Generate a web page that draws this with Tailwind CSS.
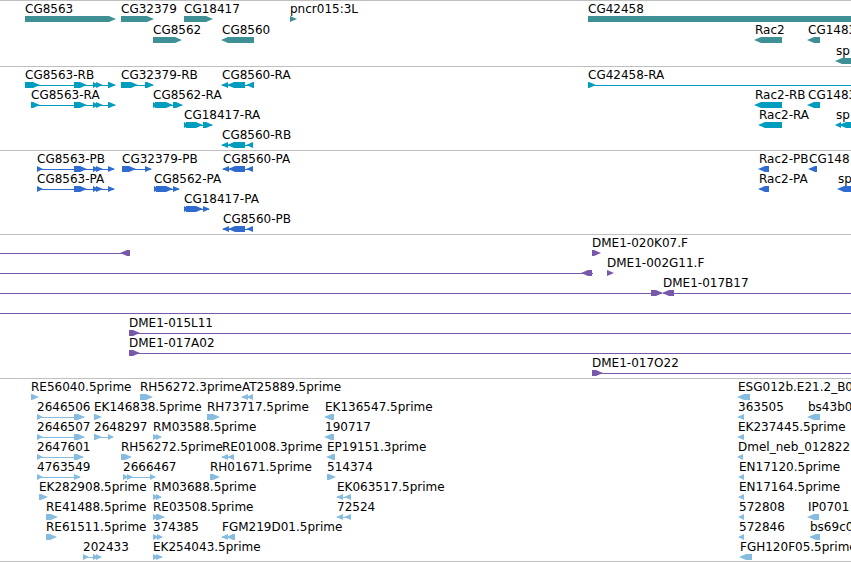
<!DOCTYPE html>
<html lang="en">
<head>
  <meta charset="UTF-8">
  <meta name="viewport" content="width=device-width, initial-scale=1">
  <title>Genome Browser</title>
  <script src="https://cdn.jsdelivr.net/npm/@tailwindcss/browser@4"></script>
</head>
<body class="bg-white text-black font-['DejaVu_Sans',sans-serif] text-[12px] leading-4 overflow-x-hidden">

  <main id="tracks" class="w-full border-b border-[#bfbfbf]"></main>

  <script>
    // feature: [label, x, strand, [[start, end], ...], line start, line end]
    const END = 4000;
    const cg8563 = [[74, 86], [93, 98], [96, 102]];
    const tracks = [
      {
        name: 'Genes', color: 'text-[#3f9094]', row: 'h-[21px]', pad: 'pb-[2px]',
        rows: [
          [
            ['CG8563', 25, 1, [[25, 115]]],
            ['CG32379', 121, 1, [[121, 153]]],
            ['CG18417', 184, 1, [[184, 212]]],
            ['pncr015:3L', 290, 1, [[290, 296]]],
            ['CG42458', 588, 1, [[588, END]]],
          ],
          [
            ['CG8562', 153, 1, [[153, 181]]],
            ['CG8560', 222, -1, [[222, 254]]],
            ['Rac2', 755, -1, [[755, 782]]],
            ['CG1483', 808, -1, [[808, 820]]],
          ],
          [
            ['sp', 836, -1, [[836, 880]]],
          ],
        ],
      },
      {
        name: 'Transcripts', color: 'text-[#009dbf]', row: 'h-[20px]', pad: 'pb-[3px]',
        rows: [
          [
            ['CG8563-RB', 25, 1, [[25, 39], ...cg8563, [108, 115]]],
            ['CG32379-RB', 121, 1, [[121, 137], [145, 153]]],
            ['CG8560-RA', 222, -1, [[222, 228], [228, 245], [247, 254]]],
            ['CG42458-RA', 588, 1, [[588, 595]], 588, END],
          ],
          [
            ['CG8563-RA', 31, 1, [[31, 39], ...cg8563, [108, 115]]],
            ['CG8562-RA', 153, 1, [[153, 157], [155, 172], [173, 182]]],
            ['Rac2-RB', 755, -1, [[755, 782]]],
            ['CG1483', 808, -1, [[808, 820]]],
          ],
          [
            ['CG18417-RA', 184, 1, [[184, 188], [186, 202], [203, 212]]],
            ['Rac2-RA', 759, -1, [[759, 782]]],
            ['sp', 836, -1, [[836, 841], [840, 880]]],
          ],
          [
            ['CG8560-RB', 222, -1, [[222, 228], [228, 245], [247, 253]]],
          ],
        ],
      },
      {
        name: 'Proteins', color: 'text-[#306ccf]', row: 'h-[20px]', pad: 'pb-[3px]',
        rows: [
          [
            ['CG8563-PB', 37, 1, [[37, 42], ...cg8563, [108, 114]]],
            ['CG32379-PB', 122, 1, [[122, 135], [145, 151]]],
            ['CG8560-PA', 223, -1, [[223, 229], [229, 245], [247, 253]]],
            ['Rac2-PB', 759, -1, [[759, 769]]],
            ['CG148', 809, -1, [[809, 817]]],
          ],
          [
            ['CG8563-PA', 37, 1, [[37, 42], ...cg8563, [108, 114]]],
            ['CG8562-PA', 154, 1, [[154, 158], [156, 172], [173, 179]]],
            ['Rac2-PA', 759, -1, [[759, 769]]],
            ['sp', 838, -1, [[838, 880]]],
          ],
          [
            ['CG18417-PA', 184, 1, [[184, 188], [186, 202], [203, 209]]],
          ],
          [
            ['CG8560-PB', 223, -1, [[223, 229], [229, 245], [247, 253]]],
          ],
        ],
      },
      {
        name: 'BACs', color: 'text-[#7858a8]', row: 'h-[20px]', pad: 'pb-[3px]',
        rows: [
          [
            ['', 0, -1, [[121, 130]], 0, 130],
            ['DME1-020K07.F', 592, 1, [[592, 600]]],
          ],
          [
            ['', 0, -1, [[582, 592]], 0, 593],
            ['DME1-002G11.F', 607, 1, [[607, 613]]],
          ],
          [
            ['', 0, 1, [[651, 662]], 0, 662],
            ['DME1-017B17', 663, -1, [[663, 674]], 663, END],
          ],
          [
            ['', 0, 1, [], 0, END],
          ],
          [
            ['DME1-015L11', 129, 1, [[129, 139]], 129, END],
          ],
          [
            ['DME1-017A02', 129, 1, [[129, 139]], 129, END],
          ],
          [
            ['DME1-017O22', 592, 1, [[592, 602]], 592, END],
          ],
        ],
      },
      {
        name: 'ESTs', color: 'text-[#86bcdf]', row: 'h-[20px]', pad: 'pb-[2px]',
        rows: [
          [
            ['RE56040.5prime', 31, 1, [[31, 38]]],
            ['RH56272.3prime', 140, 1, [[140, 152]]],
            ['AT25889.5prime', 242, -1, [[242, 248], [247, 253]]],
            ['ESG012b.E21.2_B0', 738, -1, [[738, 750]]],
          ],
          [
            ['2646506', 37, 1, [[37, 42], [74, 84]]],
            ['EK146838.5prime', 94, 1, [[94, 101]]],
            ['RH73717.5prime', 207, 1, [[207, 219]]],
            ['EK136547.5prime', 325, -1, [[325, 334]]],
            ['363505', 738, -1, [[738, 744]]],
            ['bs43b0', 808, -1, [[808, 820]]],
          ],
          [
            ['2646507', 37, 1, [[37, 42], [74, 84]]],
            ['2648297', 94, 1, [[94, 101], [108, 113]]],
            ['RM03588.5prime', 153, 1, [[153, 158], [156, 161]]],
            ['190717', 325, -1, [[325, 334]]],
            ['EK237445.5prime', 738, -1, [[738, 744]]],
          ],
          [
            ['2647601', 37, 1, [[37, 42], [74, 83]]],
            ['RH56272.5prime', 121, 1, [[121, 131]]],
            ['RE01008.3prime', 222, -1, [[222, 228], [228, 234]]],
            ['EP19151.3prime', 327, -1, [[327, 335]]],
            ['Dmel_neb_012822', 738, -1, [[738, 743]]],
          ],
          [
            ['4763549', 37, 1, [[37, 42], [74, 80]]],
            ['2666467', 123, 1, [[123, 128], [127, 132], [150, 155]]],
            ['RH01671.5prime', 210, 1, [[210, 219]]],
            ['514374', 327, 1, [[327, 335]]],
            ['EN17120.5prime', 739, -1, [[739, 744]]],
          ],
          [
            ['EK282908.5prime', 39, 1, [[39, 47]]],
            ['RM03688.5prime', 153, 1, [[153, 158], [156, 161]]],
            ['EK063517.5prime', 337, -1, [[337, 343], [345, 351]]],
            ['EN17164.5prime', 739, -1, [[739, 744]]],
          ],
          [
            ['RE41488.5prime', 46, 1, [[46, 57]]],
            ['RE03508.5prime', 153, 1, [[153, 158], [156, 164]]],
            ['72524', 337, -1, [[337, 343], [345, 351]]],
            ['572808', 739, -1, [[739, 744]]],
            ['IP0701', 808, -1, [[808, 819]]],
          ],
          [
            ['RE61511.5prime', 46, 1, [[46, 56]]],
            ['374385', 153, 1, [[153, 158], [157, 162]]],
            ['FGM219D01.5prime', 222, -1, [[222, 228], [227, 235]]],
            ['572846', 739, -1, [[739, 744]]],
            ['bs69c0', 810, -1, [[810, 820]]],
          ],
          [
            ['202433', 83, 1, [[83, 88], [93, 98], [96, 101]]],
            ['EK254043.5prime', 153, 1, [[153, 158], [156, 162]]],
            ['FGH120F05.5prime', 740, -1, [[740, 752]]],
          ],
        ],
      },
    ];

    // exon block with a pointed end, 6px high
    function exon(start, end, strand) {
      const tip = Math.min(6, end - start);
      if (strand > 0) {
        const neck = end - tip;
        return `<polygon points="${start},0 ${neck},0 ${end + 1},3 ${neck},6 ${start},6"/>`;
      }
      const neck = start + tip;
      return `<polygon points="${end},0 ${neck},0 ${start - 1},3 ${neck},6 ${end},6"/>`;
    }

    function feature([label, x, strand, exons, lineStart, lineEnd]) {
      const from = lineStart ?? exons[0][0];
      const to = lineEnd ?? exons[exons.length - 1][1];
      const hasLine = lineEnd !== undefined || exons.length > 1;
      const line = hasLine ? `<rect x="${from - x}" y="3" width="${to - from}" height="1"/>` : '';
      const blocks = exons.map(([s, e]) => exon(s - x, e - x, strand)).join('');
      return `<div class="absolute top-0" style="left:${x}px">
        <div class="h-4 whitespace-nowrap text-black">${label}</div>
        <svg class="block -mt-px h-[6px] fill-current overflow-visible" width="${to - x}" height="6">${line}${blocks}</svg>
      </div>`;
    }

    document.getElementById('tracks').innerHTML = tracks.map(t => `
      <section aria-label="${t.name}" class="border-t border-[#bfbfbf] overflow-hidden ${t.color} ${t.pad}">
        ${t.rows.map(r => `<div class="relative ${t.row}">${r.map(feature).join('')}</div>`).join('')}
      </section>`).join('');
  </script>
</body>
</html>
